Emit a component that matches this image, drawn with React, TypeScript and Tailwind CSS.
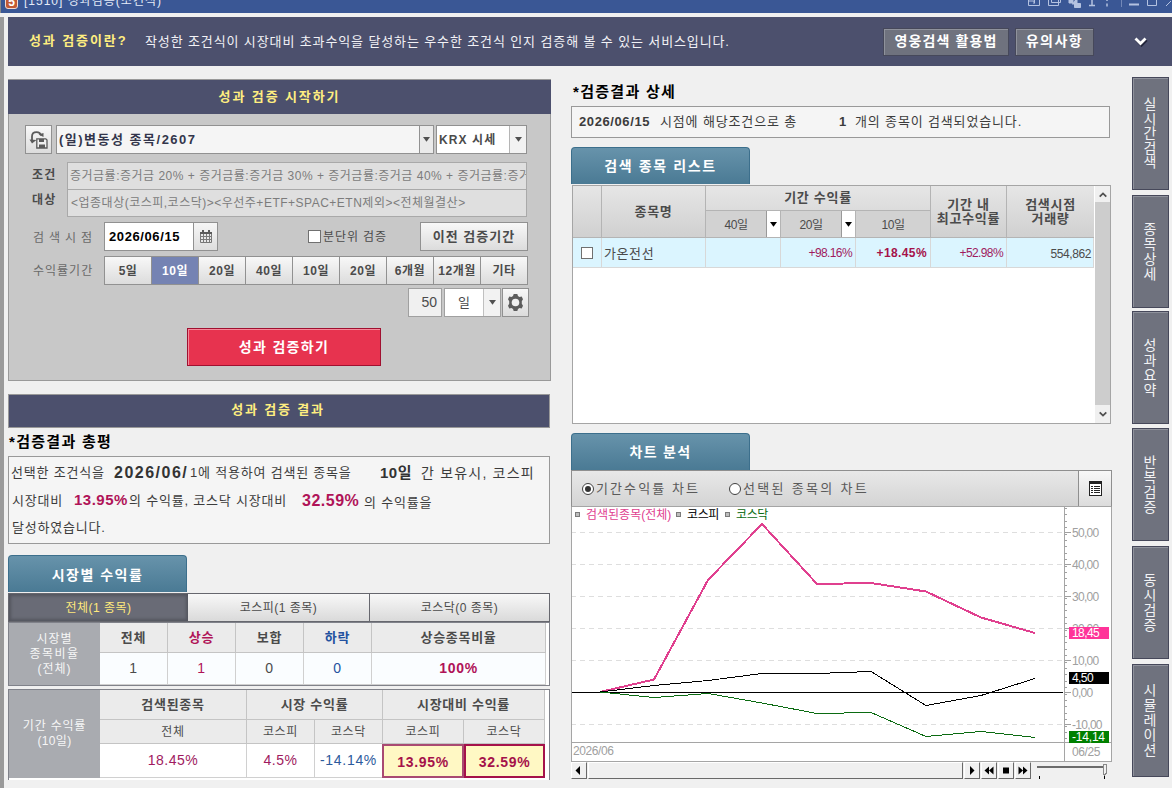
import type { ReactNode } from "react";
import clsx from "clsx";

const PERIODS = [
  { label: "5일" },
  { label: "10일", active: true },
  { label: "20일" },
  { label: "40일" },
  { label: "10일" },
  { label: "20일" },
  { label: "6개월" },
  { label: "12개월" },
  { label: "기타" },
];

const SIDE_TABS = [
  { label: "실시간검색", cls: "h-[113px] leading-[14.5px]" },
  { label: "종목상세", cls: "h-[113px] mt-[5px] leading-[15px]" },
  { label: "성과요약", cls: "h-[113px] mt-[3px] leading-[15px]" },
  { label: "반복검증", cls: "h-[113px] mt-[4px] leading-[15px]" },
  { label: "동시검증", cls: "h-[113px] mt-[5px] leading-[15px]" },
  { label: "시뮬레이션", cls: "h-[113px] mt-[5px] leading-[15px]" },
];

// chart points, in px from the top left of the plot
const XS = [29, 83, 137, 191, 246, 300, 355, 410, 464];
const SERIES = [
  { color: "#e0408f", width: 2, ys: [185, 172.5, 73, 17, 77, 76, 84.5, 110.5, 126] },
  { color: "#000000", width: 1, ys: [185, 178.5, 173.5, 166.5, 166.5, 164.5, 198.5, 188.5, 171.5] },
  { color: "#0b6b12", width: 1, ys: [185, 190.5, 186.5, 196, 206.5, 205.5, 229.5, 224.5, 230.5] },
];
const GRID = [
  { y: 25.5, label: "50,00" },
  { y: 57.5, label: "40,00" },
  { y: 89.5, label: "30,00" },
  { y: 121.5, label: "20,00" },
  { y: 153.5, label: "10,00" },
  { y: 185.5, label: "0,00" },
  { y: 217.5, label: "-10,00" },
];
const MINOR = Array.from({ length: 37 }, (_, i) => 1.5 + i * 6.4);

function Arrow({ className = "text-[#505050]" }: { className?: string }) {
  return (
    <svg width="7" height="5" viewBox="0 0 7 5" className={clsx("shrink-0", className)}>
      <path d="M0 0h7L3.500 4.800z" fill="currentColor" />
    </svg>
  );
}

function SectionTab({ children }: { children: ReactNode }) {
  return (
    <div className="flex h-[37px] w-[179px] items-center justify-center rounded-t-[4px] border border-b-0 border-[#3c6f8c] bg-linear-to-b from-[#6793ab] to-[#4a7a94] text-[14px] font-bold text-white">
      {children}
    </div>
  );
}

function Btn({ className, children }: { className?: string; children: ReactNode }) {
  return (
    <div
      className={clsx(
        "flex items-center justify-center border border-[#919191] bg-linear-to-b from-[#f8f8f8] to-[#dcdcdc]",
        className,
      )}
    >
      {children}
    </div>
  );
}

function TitleBar() {
  return (
    <div className="flex h-[13px] w-full items-start overflow-hidden border-l border-[#8a8a8a] bg-[#3a5795] pl-[4px] text-[#e4ebf8]">
      <div className="-mt-[5px] flex h-[14px] w-[13px] shrink-0 items-center justify-center rounded-[3px] border border-[#f3d9cf] bg-[#c25a34] text-[12px] font-bold leading-none text-white">
        5
      </div>
      <div className="-mt-[7px] ml-[6px] whitespace-nowrap text-[12px] leading-[16px] tracking-[1px]">
        [1510] 성과검증(조건식)
      </div>
      <svg className="ml-auto shrink-0" width="144" height="10" viewBox="0 0 144 10" fill="none" stroke="#b4c2e0">
        <path d="M.5 0v5.500h11V0M6.500 0v3M1 1h5v3M20.500 0v5.500h10V0M23.500 0v2.500h9V0" />
        <path d="M41 0h4v3h-4zM47 0h2v4h-5M48.500 3.500h4v4h-6v-4z" fill="#b4c2e0" />
        <path d="M61 5.500h6M64 0v5M79 0v1M79 3.500v3" strokeWidth="1.500" />
        <path d="M93.500 0v7" stroke="#7388b8" />
        <path d="M101 4.500h10" strokeWidth="2" />
        <path d="M119.500 0v5.500h9V0M138 6l5-5" />
      </svg>
    </div>
  );
}

function Banner() {
  return (
    <div className="ml-[4px] mt-[4px] flex h-[49px] items-center bg-[#4c506d] pl-[21px] text-[13px]">
      <span className="-mt-px w-[116px] font-bold tracking-[1.9px] text-[#ffee80]">성과 검증이란?</span>
      <span className="tracking-[0.88px] text-[#f2f2f6]">
        작성한 조건식이 시장대비 초과수익을 달성하는 우수한 조건식 인지 검증해 볼 수 있는 서비스입니다.
      </span>
      <div className="ml-auto flex gap-[6px] text-[14px] font-bold text-white">
        <div className="flex h-[28px] w-[126px] items-center justify-center border border-[#46485a] bg-[#6f727e] tracking-[1.1px] shadow-[inset_1px_1px_0_#8f929c]">
          영웅검색 활용법
        </div>
        <div className="flex h-[28px] w-[79px] items-center justify-center border border-[#46485a] bg-[#6f727e] tracking-[1.5px] shadow-[inset_1px_1px_0_#8f929c]">
          유의사항
        </div>
      </div>
      <svg className="ml-[40px] mr-[24px]" width="14" height="10" viewBox="0 0 14 10" fill="none">
        <path d="M2.500 3l5 5 5-5" stroke="#22243a" strokeWidth="3" />
        <path d="M1.500 1.500L6.500 6.500l5-5" stroke="#fff" strokeWidth="2.800" />
      </svg>
    </div>
  );
}

function StartPanel() {
  return (
    <div className="h-[302px] w-[543px] border border-[#999] bg-[#c8c8c8] text-[12px] text-[#4b4b4b]">
      <div className="-mx-px flex h-[34px] items-center justify-center bg-[#4c506d] text-[13px] font-bold tracking-[1.9px] text-[#ffee80]">
        성과 검증 시작하기
      </div>
      <div className="mt-[11px] flex h-[29px] pl-[16px]">
        <Btn className="w-[27px]">
          <svg width="19" height="19" viewBox="0 0 19 19" fill="none" stroke="#5a5a5a">
            <path d="M3 11V6.500C3 3.500 5 2.200 7.500 2.200c2.500 0 4 1 4.500 3.300" strokeWidth="1.800" />
            <path d="M.5 9.500l2.500 4 4.500-3.500zM9.500 4.500l5-1.500v4z" fill="#5a5a5a" stroke="none" />
            <path d="M7.800 8.800h9l1.200 1.200v8H7.800z" fill="#eee" strokeWidth="1.300" />
            <path d="M10 9h5v3h-5zM10 14.500h6v3.500h-6z" fill="#5a5a5a" stroke="none" />
          </svg>
        </Btn>
        <div className="ml-[4px] flex w-[378px] border border-[#919191] bg-[#f5f5f5]">
          <div className="flex flex-1 items-center pl-[2px] text-[13px] font-bold tracking-[1.5px] text-[#33354b]">
            (일)변동성 종목/2607
          </div>
          <div className="flex w-[14px] items-center justify-center border-l border-[#919191] bg-[#eaeaea]">
            <Arrow />
          </div>
        </div>
        <div className="ml-[2px] flex w-[91px] border border-[#919191] bg-white">
          <div className="flex flex-1 items-center pl-[2px] pt-px font-bold tracking-[1.1px]">KRX 시세</div>
          <div className="flex w-[17px] items-center justify-center border-l border-[#b5b5b5] bg-[#f2f2f2]">
            <Arrow />
          </div>
        </div>
      </div>

      <div className="mt-[8px] flex h-[55px] pl-[23px]">
        <div className="w-[35px] pt-[1px] text-[12px] font-bold leading-[25px] tracking-[1.2px]">
          <div>조건</div>
          <div>대상</div>
        </div>
        <div className="w-[460px] overflow-hidden whitespace-nowrap border border-[#a9a9a9] bg-[#dfdfdf] tracking-[0.5px] text-[#7c7c7c]">
          <div className="h-[27px] overflow-hidden border-b border-[#a9a9a9] pl-[2px] leading-[26px]">
            증거금률:증거금 20% + 증거금률:증거금 30% + 증거금률:증거금 40% + 증거금률:증거금 50%
          </div>
          <div className="pl-[3px] leading-[26px]">
            &lt;업종대상(코스피,코스닥)&gt;&lt;우선주+ETF+SPAC+ETN제외&gt;&lt;전체월결산&gt;
          </div>
        </div>
      </div>

      <div className="mt-[5px] flex h-[29px] items-center pl-[24px]">
        <span className="w-[71px] pt-[2px] tracking-[0.8px] text-[#6a6a6a]">검 색 시 점</span>
        <div className="flex h-[29px] w-[114px] border border-[#919191] bg-white">
          <div className="flex w-[88px] items-center pl-[4px] text-[13px] font-bold tracking-[0.6px] text-black">
            2026/06/15
          </div>
          <div className="flex flex-1 items-center justify-center border-l border-[#919191] bg-linear-to-b from-[#f6f6f6] to-[#dedede]">
            <svg width="12" height="13" viewBox="0 0 12 13" fill="none" stroke="#5a5a5a">
              <path d="M.5 2.500h11v10H.5z" fill="#e8e8e8" stroke="#777" />
              <path d="M0 3h12M3 0v3M9 0v3" strokeWidth="2" />
              <path d="M0 6.500h12M0 9.500h12M3.500 4v8M6.500 4v8M9.500 4v8" stroke="#7a7a7a" />
            </svg>
          </div>
        </div>
        <div className="ml-[90px] h-[13px] w-[13px] border border-[#707070] bg-white" />
        <span className="ml-[2px] w-[97px] pt-px tracking-[0.9px]">분단위 검증</span>
        <Btn className="h-[29px] w-[108px] text-[13px] font-bold tracking-[1px]">이전 검증기간</Btn>
      </div>

      <div className="mt-[5px] flex h-[29px] items-center pl-[24px]">
        <span className="w-[71px] tracking-[1px] text-[#6a6a6a]">수익률기간</span>
        <div className="flex h-[29px] w-[424px] border-r border-[#919191] font-bold tracking-[0.5px]">
          {PERIODS.map((p, i) => (
            <Btn
              key={i}
              className={clsx(
                "min-w-0 flex-1 whitespace-nowrap border-r-0",
                p.active && "border-[#56618f] bg-none bg-[#7583b3] text-white",
              )}
            >
              {p.label}
            </Btn>
          ))}
        </div>
      </div>

      <div className="mt-[3px] flex h-[29px] pl-[399px]">
        <div className="flex w-[34px] items-center justify-end border border-[#a0a0a0] bg-[#f0f0f0] pr-[4px] text-[14px]">
          50
        </div>
        <div className="ml-[2px] flex w-[57px] border border-[#a0a0a0] bg-white">
          <div className="flex flex-1 items-center justify-center text-[13px]">일</div>
          <div className="flex w-[17px] items-center justify-center border-l border-[#c0c0c0] bg-[#f2f2f2]">
            <Arrow />
          </div>
        </div>
        <Btn className="ml-[1px] w-[27px]">
          <svg width="15" height="17" viewBox="0 0 15 17">
            <path
              d="M5.700 0h3.600l.7 2 1.500.9 2.200-.4L15 5.300l-1.200 2v2.400l1.200 2-1.300 2.800-2.200-.4-1.500.9-.7 2H5.700l-.7-2-1.500-.9-2.200.4L0 11.700l1.200-2V7.300l-1.200-2 1.300-2.800 2.200.4L5 2z"
              fill="#5c5c5c"
            />
            <circle cx="7.500" cy="8.500" r="3.800" fill="#f0f0f0" />
          </svg>
        </Btn>
      </div>

      <div className="ml-[178px] mt-[11px] flex h-[38px] w-[194px] items-center justify-center border border-[#a01030] bg-[#e7334f] text-[14px] font-bold tracking-[1.3px] text-white shadow-[inset_1px_1px_0_#f58a9b]">
        성과 검증하기
      </div>
    </div>
  );
}

function Summary() {
  return (
    <div className="h-[88px] w-[542px] whitespace-nowrap border border-[#999] bg-[#f5f5f5] pl-[2px] pt-[2px] text-[13px] tracking-[0.8px] text-[#3c3c3c]">
      <div className="flex h-[28px] items-center">
        <span className="w-[103px]">선택한 조건식을</span>
        <b className="w-[76px] text-[16px] font-bold tracking-[1.5px] text-[#333]">2026/06/</b>
        <span className="w-[190px]">1에 적용하여 검색된 종목을</span>
        <b className="w-[41px] text-[15px] tracking-[0.5px] text-[#333]">10일</b>
        <span className="text-[14px] tracking-[1.2px]">간 보유시, 코스피</span>
      </div>
      <div className="flex h-[27px] items-center">
        <span className="w-[63px] pl-px">시장대비</span>
        <b className="w-[55px] text-[15px] tracking-[0.5px] text-[#b01358]">13.95%</b>
        <span className="w-[173px]">의 수익률, 코스닥 시장대비</span>
        <b className="w-[62px] text-[16px] tracking-[0.5px] text-[#b01358]">32.59%</b>
        <span className="pt-[4px]">의 수익률을</span>
      </div>
      <div className="flex h-[27px] items-center pl-px">달성하였습니다.</div>
    </div>
  );
}

function Th({ className, children }: { className?: string; children?: ReactNode }) {
  return (
    <div className={clsx("flex items-center justify-center border-b border-r border-[#c4c4c4] bg-[#ebebeb]", className)}>
      {children}
    </div>
  );
}

function Td({ className, children }: { className?: string; children?: ReactNode }) {
  return (
    <div className={clsx("flex items-center justify-center border-r border-b border-[#d0d0d0]", className)}>
      {children}
    </div>
  );
}

function RowLabel({ children }: { children: ReactNode }) {
  return (
    <div className="row-span-full flex flex-col items-center justify-center bg-[#a9abb0] text-center text-[12px] leading-[15px] tracking-[1px] text-[#f6f6f6]">
      {children}
    </div>
  );
}

function MarketReturns() {
  return (
    <div className="text-[#4b4b4b]">
      <div className="mt-px flex h-[29px] w-[542px] border border-[#66676e] text-[12px] tracking-[0.5px]">
        <div className="flex w-[179px] items-center justify-center bg-[#696b76] text-[#ffe97c] shadow-[inset_0_0_3px_2px_#54565f]">
          전체(1 종목)
        </div>
        <div className="flex w-[181px] items-center justify-center bg-linear-to-b from-[#f8f8f8] to-[#dadada]">
          코스피(1 종목)
        </div>
        <div className="flex flex-1 items-center justify-center border-l border-[#66676e] bg-linear-to-b from-[#f8f8f8] to-[#dadada]">
          코스닥(0 종목)
        </div>
      </div>
      <div className="grid h-[64px] w-[542px] grid-cols-[91px_68px_68px_68px_68px_174px] grid-rows-[30px_32px] border border-[#80828a] bg-white text-[13px] tracking-[0.7px]">
        <RowLabel>
          <span>시장별</span>
          <span className="tracking-[1.5px]">종목비율</span>
          <span>(전체)</span>
        </RowLabel>
        <Th className="font-bold">전체</Th>
        <Th className="font-bold text-[#b01358]">상승</Th>
        <Th className="font-bold">보합</Th>
        <Th className="font-bold text-[#2352a0]">하락</Th>
        <Th className="font-bold">상승종목비율</Th>
        <Td className="bg-[#fafdff] text-[14px]">1</Td>
        <Td className="bg-[#fafdff] text-[14px] text-[#b01358]">1</Td>
        <Td className="bg-[#fafdff] text-[14px]">0</Td>
        <Td className="bg-[#fafdff] text-[14px] text-[#2352a0]">0</Td>
        <Td className="bg-[#fafdff] text-[14px] font-bold text-[#b01358]">100%</Td>
      </div>
      <div className="mt-[3px] grid h-[91px] w-[542px] grid-cols-[91px_147px_68px_68px_81px_81px] grid-rows-[30px_24px_34px] border border-b-0 border-[#80828a] bg-white text-[12px] tracking-[0.7px]">
        <RowLabel>
          <span className="tracking-[0.8px]">기간 수익률</span>
          <span className="tracking-[0.3px]">(10일)</span>
        </RowLabel>
        <Th className="text-[13px] font-bold">검색된종목</Th>
        <Th className="col-span-2 text-[13px] font-bold">시장 수익률</Th>
        <Th className="col-span-2 text-[13px] font-bold">시장대비 수익률</Th>
        <Th>전체</Th>
        <Th>코스피</Th>
        <Th>코스닥</Th>
        <Th>코스피</Th>
        <Th>코스닥</Th>
        <Td className="text-[14px] tracking-[0.5px] text-[#a01a60]">18.45%</Td>
        <Td className="text-[14px] tracking-[0.5px] text-[#a01a60]">4.5%</Td>
        <Td className="text-[14px] text-[#2c5a9c]">-14.14%</Td>
        <div className="-ml-px flex items-center justify-center border-2 border-[#a94a72] bg-[#fff8c4] pt-[3px] text-[14px] font-bold text-[#a5124a]">
          13.95%
        </div>
        <div className="flex items-center justify-center border-2 border-[#a5124a] bg-[#fff8c4] pt-[3px] text-[14px] font-bold text-[#a5124a]">
          32.59%
        </div>
      </div>
    </div>
  );
}

function HeadCell({ className, children }: { className?: string; children?: ReactNode }) {
  return (
    <div
      className={clsx(
        "flex flex-col items-center justify-center border-b border-r border-[#b4b4b4] bg-linear-to-b from-[#e6e6e6] to-[#d0d0d0] text-center",
        className,
      )}
    >
      {children}
    </div>
  );
}

function PeriodCell({ children, dropdown }: { children: ReactNode; dropdown?: boolean }) {
  return (
    <div className="flex border-b border-r border-[#b4b4b4] bg-[#d2d2d2] text-[12px] font-normal tracking-[-0.5px]">
      <div className="flex flex-1 items-center justify-center pt-px">{children}</div>
      {dropdown && (
        <div className="flex w-[14px] items-center justify-center border-l border-[#999] bg-white">
          <Arrow className="text-black" />
        </div>
      )}
    </div>
  );
}

function StockList() {
  return (
    <div className="ml-px mt-px flex h-[239px] w-[539px] border border-[#a5a5a5] bg-white">
      <div className="w-[521px] text-[#4b4b4b]">
        <div className="grid grid-cols-[29px_104px_75px_75px_75px_76px_87px] grid-rows-[25px_27px] text-[13px] font-bold leading-[14px] tracking-[0.7px]">
          <HeadCell className="row-span-2" />
          <HeadCell className="row-span-2">종목명</HeadCell>
          <HeadCell className="col-span-3 from-[#e6e6e6] to-[#dcdcdc]">기간 수익률</HeadCell>
          <HeadCell className="row-span-2">
            <span>기간 내</span>
            <span>최고수익률</span>
          </HeadCell>
          <HeadCell className="row-span-2 border-r-0">
            <span>검색시점</span>
            <span>거래량</span>
          </HeadCell>
          <PeriodCell dropdown>40일</PeriodCell>
          <PeriodCell dropdown>20일</PeriodCell>
          <PeriodCell>10일</PeriodCell>
        </div>
        <div className="grid h-[30px] grid-cols-[29px_104px_75px_75px_75px_76px_87px] text-[12px] *:flex *:items-center *:border-b *:border-r *:border-[#d8d8d8] *:bg-[#dbf5ff]">
          <div className="justify-center">
            <span className="h-[12px] w-[12px] border border-[#707070] bg-white" />
          </div>
          <div className="pl-[2px] pt-[3px] text-[13px] tracking-[0.6px]">가온전선</div>
          <div />
          <div className="justify-end pr-[3px] tracking-[-0.6px] text-[#a01a60]">+98.16%</div>
          <div className="justify-end pr-[3px] font-bold tracking-[0.4px] text-[#a5124a]">+18.45%</div>
          <div className="justify-end pr-[3px] tracking-[-0.6px] text-[#a01a60]">+52.98%</div>
          <div className="justify-end border-r-0 pr-[2px] pt-[3px] tracking-[-0.4px]">554,862</div>
        </div>
      </div>
      <div className="ml-px flex w-[15px] flex-col items-center bg-[#f0f0f0] text-[#505050]">
        <svg className="mt-[6px]" width="8" height="6" viewBox="0 0 8 6" fill="none">
          <path d="M.7 4.700L4 1.400l3.300 3.300" stroke="currentColor" strokeWidth="1.800" />
        </svg>
        <div className="mt-[4px] h-[203px] w-full bg-[#cdcdcd]" />
        <svg className="mt-[6px]" width="8" height="6" viewBox="0 0 8 6" fill="none">
          <path d="M.7 1.300L4 4.600l3.300-3.300" stroke="currentColor" strokeWidth="1.800" />
        </svg>
      </div>
    </div>
  );
}

function Radio({ checked }: { checked?: boolean }) {
  return (
    <span className="flex h-[12px] w-[12px] items-center justify-center rounded-full border border-[#404040] bg-white">
      {checked && <span className="h-[6px] w-[6px] rounded-full bg-[#333]" />}
    </span>
  );
}

function Plot() {
  return (
    <svg width="541" height="255" viewBox="0 0 541 255" className="block bg-white text-[12px]">
      <g shapeRendering="crispEdges" fill="none">
        {GRID.map((g) => (
          <path key={g.y} d={`M0 ${g.y}h492`} stroke="#dedede" strokeDasharray="5 4" />
        ))}
        {MINOR.map((y) => (
          <path key={y} d={`M494 ${y}h2`} stroke="#a0a0a0" />
        ))}
        {GRID.map((g) => (
          <path key={g.y} d={`M494 ${g.y}h6`} stroke="#a0a0a0" />
        ))}
        <path d="M493.500 0v255M0 235.500h541" stroke="#a5a5a5" />
        <path d="M.5 0v255M540.500 0v255M0 254.500h541" stroke="#a5a5a5" />
        <path d="M1 185.500h491" stroke="#000" />
        {SERIES.map((s) => (
          <polyline
            key={s.color}
            points={XS.map((x, i) => `${x},${s.ys[i]}`).join(" ")}
            stroke={s.color}
            strokeWidth={s.width}
          />
        ))}
      </g>
      <g fill="#a0a0a0" className="tracking-[-0.7px]">
        {GRID.map((g) => (
          <text key={g.y} x="501" y={g.y + 4}>
            {g.label}
          </text>
        ))}
        <text x="2" y="248" className="tracking-[-0.4px]">2026/06</text>
        <text x="501" y="249" className="tracking-[-0.4px]">06/25</text>
      </g>
      <g className="tracking-[-0.6px]" fill="#fff">
        <rect x="498" y="120" width="40" height="12" fill="#ff3399" />
        <text x="501" y="130">18,45</text>
        <rect x="498" y="165" width="40" height="12" fill="#000" />
        <text x="501" y="175">4,50</text>
        <rect x="498" y="224" width="40" height="12" fill="#008000" />
        <text x="501" y="234" className="tracking-[-0.2px]">-14,14</text>
      </g>
      <g fill="#bdbdbd" stroke="#7a7a7a">
        <rect x="4.500" y="5.500" width="4" height="4" />
        <rect x="105.500" y="5.500" width="4" height="4" />
        <rect x="154.500" y="5.500" width="4" height="4" />
      </g>
      <text x="15" y="12" fill="#e0408f" className="tracking-[0px]">검색된종목(전체)</text>
      <text x="116" y="12" fill="#000" className="tracking-[-0.4px]">코스피</text>
      <text x="165" y="12" fill="#0b6b12" className="tracking-[-0.4px]">코스닥</text>
    </svg>
  );
}

function NavBtn({ d }: { d: string }) {
  return (
    <div className="flex h-[17px] w-[16px] shrink-0 items-center justify-center border border-l-white border-t-white border-b-[#696969] border-r-[#696969] bg-[#f0f0f0]">
      <svg width="10" height="9" viewBox="0 0 10 9">
        <path d={d} fill="#000" />
      </svg>
    </div>
  );
}

function ChartPanel() {
  return (
    <div className="w-[541px]">
      <div className="flex h-[37px] items-center border border-[#8f8f8f] border-b-[#a5a5a5] bg-linear-to-b from-[#e8e8e8] to-[#d4d4d4] pl-[10px] text-[13px] text-[#5a5a5a]">
        <Radio checked />
        <span className="ml-[2px] w-[133px] tracking-[2.1px]">기간수익률 차트</span>
        <Radio />
        <span className="ml-[2px] tracking-[2.3px]">선택된 종목의 차트</span>
        <div className="ml-auto flex h-full w-[33px] items-center justify-center border-l border-[#8f8f8f] bg-linear-to-b from-[#f8f8f8] to-[#dcdcdc]">
          <svg width="13" height="15" viewBox="0 0 13 15" fill="none" stroke="#222" shapeRendering="crispEdges">
            <path d="M.5 1.500h12v13H.5z" fill="#fff" />
            <path d="M0 1.500h13" strokeWidth="3" />
            <path d="M2 5.500h2M5 5.500h6M2 7.500h2M5 7.500h6M2 9.500h2M5 9.500h6M2 11.500h2M5 11.500h6" />
          </svg>
        </div>
      </div>
      <Plot />
      <div className="flex h-[17px] gap-px">
        <NavBtn d="M6 0v9L1.500 4.500z" />
        <div className="w-[375px] border border-l-white border-t-white border-b-[#696969] border-r-[#696969] bg-[#f0f0f0]" />
        <NavBtn d="M3 0v9l4.500-4.500z" />
        <NavBtn d="M5 .5v8L.5 4.500zM9.500 .5v8L5 4.500z" />
        <NavBtn d="M2 1.500h6v6H2z" />
        <NavBtn d="M.5 .5v8L5 4.500zM5 .5v8l4.500-4z" />
        <svg className="ml-[4px] shrink-0" width="72" height="17" viewBox="0 0 72 17" shapeRendering="crispEdges">
          <path d="M1 5h66" stroke="#6b6b6b" strokeWidth="2" />
          <path d="M67.500 2h3v9l-2 2-1-1z" fill="#f0f0f0" stroke="#888" />
          <path d="M3.500 14v3M68.500 14v3" stroke="#000" />
        </svg>
      </div>
    </div>
  );
}

export default function App() {
  return (
    <div className="h-[788px] w-[1172px] overflow-hidden bg-[#f0f0f0] [font-family:'Liberation_Sans','Noto_Sans_CJK_KR',sans-serif]">
      <TitleBar />
      <div className="h-[775px] border-l-[4px] border-[#9a9a9a]">
        <Banner />
        <div className="flex pl-[4px]">
          <div className="w-[563px] pt-[13px]">
            <StartPanel />
            <div className="mt-[13px] flex h-[34px] w-[542px] items-center justify-center border border-[#999] bg-[#4c506d] pb-[3px] pr-[2px] text-[13px] font-bold tracking-[1.8px] text-[#ffee80]">
              성과 검증 결과
            </div>
            <div className="h-[28px] pl-px text-[15px] font-bold leading-[27px] tracking-[1.3px] text-black">
              *검증결과 총평
            </div>
            <Summary />
            <div className="mt-[11px]">
              <SectionTab>
                <span className="pt-[3px] tracking-[1.5px]">시장별 수익률</span>
              </SectionTab>
            </div>
            <MarketReturns />
          </div>

          <div className="w-[561px] pt-[13px]">
            <div className="h-[27px] pl-[2px] text-[15px] font-bold leading-[25px] tracking-[1.3px] text-black">
              *검증결과 상세
            </div>
            <div className="flex h-[32px] w-[539px] items-center border border-[#999] bg-[#f5f5f5] pl-[7px] text-[13px] tracking-[0.85px] text-[#3c3c3c]">
              <b className="w-[81px] tracking-[0.6px]">2026/06/15</b>
              <span className="w-[179px]">시점에 해당조건으로 총</span>
              <b className="w-[16px]">1</b>
              <span>개의 종목이 검색되었습니다.</span>
            </div>
            <div className="mt-[9px]">
              <SectionTab>
                <span className="tracking-[1.6px]">검색 종목 리스트</span>
              </SectionTab>
            </div>
            <StockList />
            <div className="mt-[9px]">
              <SectionTab>
                <span className="tracking-[1.3px]">차트 분석</span>
              </SectionTab>
            </div>
            <ChartPanel />
          </div>

          <div className="w-[37px] pt-[11px] text-[14px] text-[#f2f2f4]">
            {SIDE_TABS.map((t) => (
              <div
                key={t.label}
                className={clsx(
                  "flex flex-col items-center justify-center border border-[#46485a] bg-[#6f727e] pr-px shadow-[inset_1px_1px_0_#8f929c]",
                  t.cls,
                )}
              >
                {t.label.split("").map((c, i) => (
                  <span key={i}>{c}</span>
                ))}
              </div>
            ))}
          </div>
        </div>
      </div>
    </div>
  );
}
